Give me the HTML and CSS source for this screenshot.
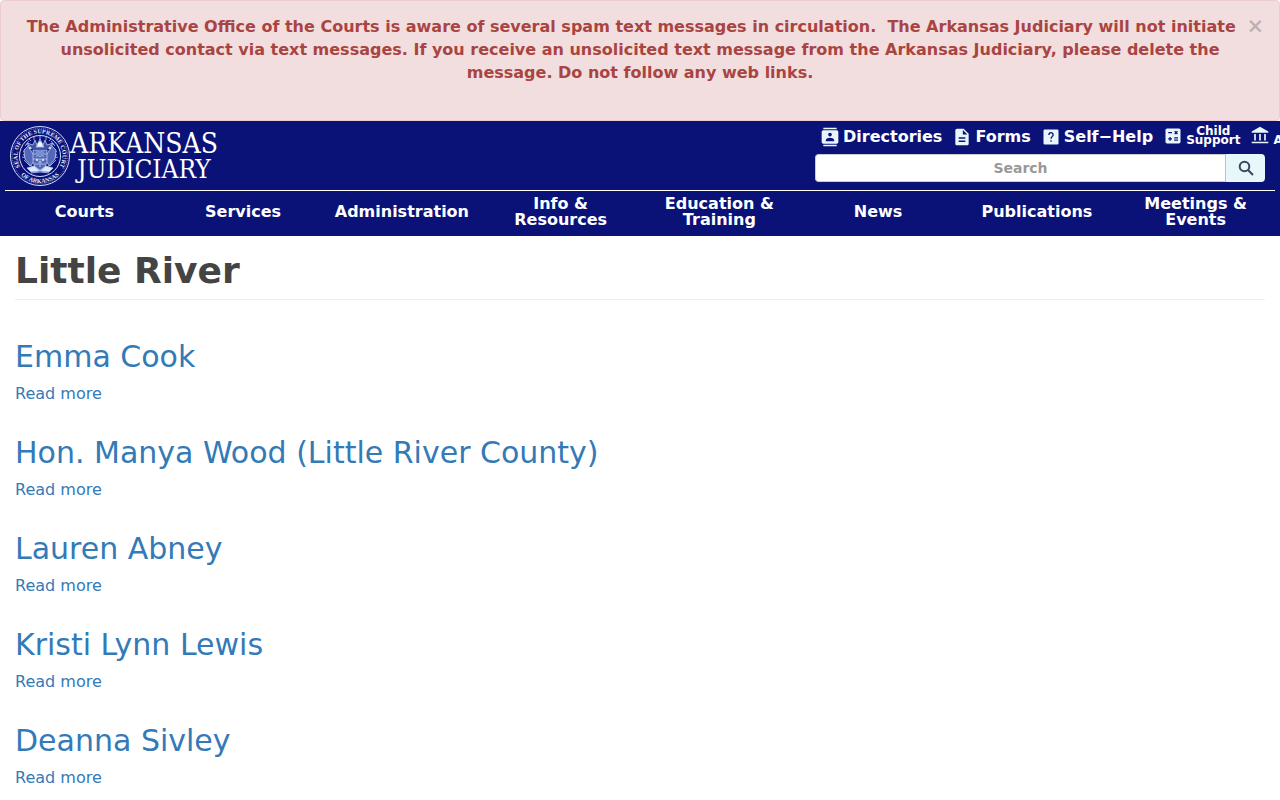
FILE: index.html
```html
<!DOCTYPE html>
<html lang="en">
  <head>
    <meta charset="UTF-8" />
    <meta name="viewport" content="width=device-width, initial-scale=1.0" />
    <title>Little River | Arkansas Judiciary</title>
    <link rel="stylesheet" href="styles.css">
  </head>
  <body>
    <div class="alert" role="alert">
      <button type="button" class="close" aria-label="Close">×</button>
      <p>The Administrative Office of the Courts is aware of several spam text messages in circulation.&nbsp; The Arkansas Judiciary will not initiate unsolicited contact via text messages. If you receive an unsolicited text message from the Arkansas Judiciary, please delete the message. Do not follow any web links.</p>
    </div>

    <header class="header">
      <div class="header-top">
        <a href="/" class="logo" aria-label="Arkansas Judiciary">
          <svg width="215" height="66" viewBox="0 0 215 66">
            <defs>
              <path id="seal-ring" d="M17.6 47.1A22.5 22.5 0 1 1 52.4 47.1" />
              <path id="seal-bottom" d="M14 50A27 27 0 0 0 56 50" />
            </defs>
            <g fill="none" stroke="#cfdcff">
              <circle cx="35" cy="33" r="29.5" />
              <circle cx="35" cy="33" r="27.8" stroke-width=".5" stroke-dasharray="1 1" />
              <circle cx="35" cy="33" r="20.5" />
            </g>
            <g class="seal-text">
              <text><textPath href="#seal-ring" startOffset="50%" text-anchor="middle">SEAL OF THE SUPREME COURT</textPath></text>
              <text><textPath href="#seal-bottom" startOffset="50%" text-anchor="middle">OF ARKANSAS</textPath></text>
            </g>
            <!-- coat of arms -->
            <g fill="none" stroke="#b9c8f2" stroke-width=".8">
              <path d="M20 23l4-5M50 23l-4-5M18 29l5-3M52 29l-5-3M17 34l5 1M53 34l-5 1" />
              <path d="M20 27l5 7M18 31l6 8M19 37l6 6M50 27l-5 7M52 31l-6 8M51 37l-6 6" />
              <path d="M28 31l-5-8-4 4 1 9 6 7 2-4M42 31l5-8 4 4-1 9-6 7-2-4" fill="#5368b8" />
              <path d="M28 27h14v10q0 7-7 10q-7-3-7-10zM28 31h14M28 36h14M29 41h12" fill="#5368b8" />
              <path d="M31 29h8M31 33.500l2-1 2 1 2-1 2 1M33 39h4M35 36v8" />
              <path d="M27 26l-5-6 6 2 2-5 2 5 3-6 3 6 2-5 2 5 6-2-5 6" fill="#3a4fa5" />
              <path d="M31 24l4-6 4 6zM22 45l7-2 6 5 6-5 7 2-4 4-9-1-9 1z" fill="#dfe8ff" />
              <path d="M24 16l2 2M29 14v3M35 13v3M41 14v3M46 16l-2 2M21 21l3 2M49 21l-3 2M26 50l9-1 9 1" />
            </g>
            <g fill="#f3f7ff">
              <circle cx="35" cy="21" r="2" />
              <circle cx="25" cy="25" r="1" />
              <circle cx="45" cy="25" r="1" />
              <circle cx="32" cy="37" r="1" />
              <circle cx="38" cy="37" r="1" />
            </g>
            <text class="logo-text logo-name" x="139" y="30" text-anchor="middle">ARKANSAS</text>
            <text class="logo-text" x="139" y="55" text-anchor="middle">JUDICIARY</text>
          </svg>
        </a>

        <div class="header-tools">
          <ul class="quick-links">
            <li>
              <a href="/directories">
                <svg width="20" height="20" viewBox="0 0 24 24"><path d="M20 1H4v1.600h16V1zM4 23h16v-1.600H4V23zM20 4H4c-1.100 0-2 .9-2 2v12c0 1.100.9 2 2 2h16c1.100 0 2-.9 2-2V6c0-1.100-.9-2-2-2zm-8 2.750c1.240 0 2.250 1.010 2.250 2.250s-1.010 2.250-2.250 2.250S9.750 10.240 9.750 9 10.760 6.750 12 6.750zM17 17H7v-1.500c0-1.670 3.330-2.500 5-2.500s5 .83 5 2.500V17z" /></svg>
                <span>Directories</span>
              </a>
            </li>
            <li>
              <a href="/forms">
                <svg width="20" height="20" viewBox="0 0 24 24"><path d="M14 2H6c-1.100 0-1.990.9-1.990 2L4 20c0 1.100.89 2 1.990 2H18c1.100 0 2-.9 2-2V8l-6-6zm2 16H8v-1.700h8V18zm0-4H8v-1.700h8V14zm-3-5V3.500L18.500 9H13z" /></svg>
                <span>Forms</span>
              </a>
            </li>
            <li>
              <a href="/self-help">
                <svg width="20" height="20" viewBox="0 0 24 24"><path d="M4.500 3h15A1.500 1.500 0 0 1 21 4.500v15a1.500 1.500 0 0 1-1.500 1.500h-15A1.500 1.500 0 0 1 3 19.500v-15A1.500 1.500 0 0 1 4.500 3z" /><path class="cut" d="M9.500 9.500c0-3.500 5-3.500 5-.3 0 2.300-2.500 2.500-2.500 5M12 15.800v1.900" /></svg>
                <span>Self−Help</span>
              </a>
            </li>
            <li>
              <a href="/child-support" class="two-line">
                <svg width="20" height="20" viewBox="0 0 24 24"><path d="M19 3H5c-1.100 0-2 .9-2 2v14c0 1.100.9 2 2 2h14c1.100 0 2-.9 2-2V5c0-1.100-.9-2-2-2z" /><path class="cut" d="M6.200 8h4.600M14 6.300l3.400 3.400M17.400 6.300L14 9.700M6.200 15.500h4.600M8.500 13.200v4.600M13.400 14.300h4.600M13.400 17h4.600" /></svg>
                <span>Child<br>Support</span>
              </a>
            </li>
            <li>
              <a href="/administration" class="two-line">
                <svg width="20" height="20" viewBox="0 0 24 24"><path d="M12 1L2 6.500V8h20V6.500zM5 9.500h2v8H5zM11 9.500h2v8h-2zM17 9.500h2v8h-2zM2 19h20v1.600H2z" /></svg>
                <span>Judicial<br>Administration</span>
              </a>
            </li>
          </ul>
          <form class="search" action="/search" role="search">
            <input type="text" name="q" placeholder="Search" aria-label="Search">
            <button type="submit" aria-label="Submit search">
              <svg width="16" height="16" viewBox="0 0 16 16"><circle cx="6.500" cy="6.500" r="4.800" /><path d="M10 10l5 5" /></svg>
            </button>
          </form>
        </div>
      </div>

      <nav class="main-nav" aria-label="Main">
        <a href="/courts">Courts</a>
        <a href="/services">Services</a>
        <a href="/administration">Administration</a>
        <a href="/resources">Info &amp;<br>Resources</a>
        <a href="/education">Education &amp;<br>Training</a>
        <a href="/news">News</a>
        <a href="/publications">Publications</a>
        <a href="/events">Meetings &amp;<br>Events</a>
      </nav>
    </header>

    <main class="content">
      <h1>Little River</h1>
      <article>
        <h2><a href="/emma-cook">Emma Cook</a></h2>
        <a href="/emma-cook">Read more</a>
      </article>
      <article>
        <h2><a href="/manya-wood">Hon. Manya Wood (Little River County)</a></h2>
        <a href="/manya-wood">Read more</a>
      </article>
      <article>
        <h2><a href="/lauren-abney">Lauren Abney</a></h2>
        <a href="/lauren-abney">Read more</a>
      </article>
      <article>
        <h2><a href="/kristi-lynn-lewis">Kristi Lynn Lewis</a></h2>
        <a href="/kristi-lynn-lewis">Read more</a>
      </article>
      <article>
        <h2><a href="/deanna-sivley">Deanna Sivley</a></h2>
        <a href="/deanna-sivley">Read more</a>
      </article>
    </main>
  </body>
</html>
```
FILE: styles.css
```css
* {
  box-sizing: border-box;
}
body {
  margin: 0;
  font-family: "DejaVu Sans", sans-serif;
  font-size: 16px;
  line-height: 23px;
  color: #444;
  background: #fff;
  overflow-x: hidden;
}
a {
  color: #337ab7;
  text-decoration: none;
}
.alert {
  padding: 14px 15px 36px;
  border: 1px solid #ebccd1;
  border-radius: 4px;
  background: #f2dede;
  color: #a94442;
  font-weight: bold;
  text-align: center;
}
.alert p {
  margin: 0;
}
.close {
  float: right;
  padding: 0;
  border: 0;
  background: transparent;
  font: bold 21px/23px "DejaVu Sans", sans-serif;
  color: #000;
  text-shadow: 0 1px 0 #fff;
  opacity: 0.2;
  cursor: pointer;
}

/* header */
.header {
  padding: 0 5px;
  background: #0a1278;
  overflow: hidden;
}
.header-top {
  display: flex;
  justify-content: space-between;
  padding: 2px 10px 1px 0;
  border-bottom: 1px solid #fff;
}
.logo svg {
  display: block;
}
.logo-text {
  font: 26px "DejaVu Serif Condensed", "Liberation Serif", serif;
  fill: #fff;
}
.logo-name {
  font-size: 28px;
}
.seal-text {
  font: bold 6px "Liberation Serif", serif;
  fill: #e8efff;
}
.header-tools {
  width: 450px;
}
.quick-links {
  display: flex;
  gap: 9px;
  height: 31px;
  margin: 0;
  padding: 0 0 0 5px;
  list-style: none;
}
.quick-links li {
  flex: none;
}
.quick-links a {
  display: flex;
  align-items: center;
  gap: 3px;
  height: 27px;
  color: #fff;
  font-weight: bold;
}
.quick-links li + li {
  padding-left: 1px;
}
.quick-links svg {
  fill: #e8f6fc;
}
.quick-links .cut {
  fill: none;
  stroke: #0a1278;
  stroke-width: 1.6;
}
.quick-links .two-line {
  height: 25px;
  font-size: 12px;
  line-height: 9px;
  text-align: center;
}
.search {
  display: flex;
  height: 28px;
}
.search input {
  flex: 1;
  min-width: 0;
  border: 1px solid #ccc;
  border-right: 0;
  border-radius: 4px 0 0 4px;
  background: #fff;
  font: bold 14px "DejaVu Sans", sans-serif;
  text-align: center;
}
.search input::placeholder {
  color: #999;
}
.search button {
  display: flex;
  align-items: center;
  justify-content: center;
  width: 40px;
  padding: 0;
  border: 0;
  border-left: 1px solid #b8c4d0;
  border-radius: 0 4px 4px 0;
  background: #e8f7fa;
  cursor: pointer;
}
.search svg {
  fill: none;
  stroke: #34495e;
  stroke-width: 2;
}
.main-nav {
  display: grid;
  grid-template-columns: repeat(8, 1fr);
  height: 45px;
  padding-bottom: 4px;
}
.main-nav a {
  display: flex;
  align-items: center;
  justify-content: center;
  color: #fff;
  font-weight: bold;
  line-height: 16px;
  text-align: center;
}

/* listing */
.content {
  padding: 0 15px;
}
.content h1 {
  margin: 0 0 40px;
  padding: 15px 0 9px;
  border-bottom: 1px solid #eee;
  font-size: 36px;
  line-height: 39px;
}
.content article {
  margin-bottom: 31px;
}
.content h2 {
  margin: 0 0 9px;
  font-size: 30px;
  font-weight: normal;
  line-height: 33px;
}
```
